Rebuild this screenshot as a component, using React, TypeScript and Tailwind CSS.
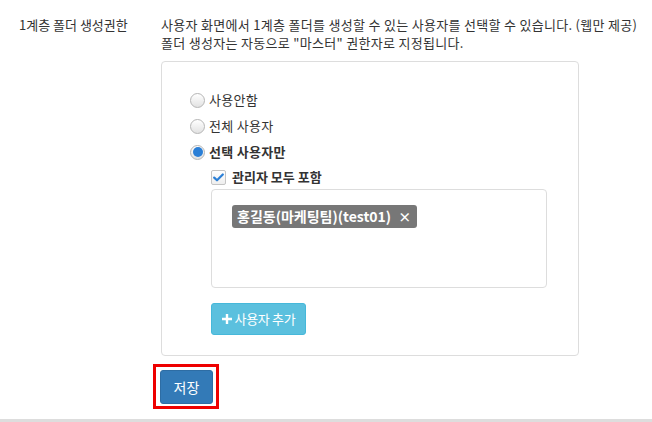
import React from "react";

function Radio({ checked, label, bold }: { checked?: boolean; label: string; bold?: boolean }) {
  return (
    <div className="flex h-[26px] items-center">
      <span className="flex h-[15px] w-[15px] items-center justify-center rounded-full border border-[#b5b5b5] bg-gradient-to-b from-[#ffffff] to-[#e2e2e2]">
        {checked && <span className="h-[10px] w-[10px] rounded-full bg-[#2b7fd6]" />}
      </span>
      <span className={"ml-[4px] text-[13px] tracking-[0.3px] text-[#333] " + (bold ? "font-bold" : "")}>{label}</span>
    </div>
  );
}

export default function App() {
  return (
    <div
      className="flex h-[422px] w-[652px] flex-col bg-white text-[#333]"
      style={{ fontFamily: '"Noto Sans CJK KR", "Noto Sans", sans-serif' }}
    >
      <div className="flex flex-1 pl-[19px] pt-[16px]">
        <div className="w-[142px] text-[13px] leading-[18px]">1계층 폴더 생성권한</div>
        <div className="flex flex-col">
          <div className="whitespace-nowrap text-[13px] leading-[18px] tracking-[0.3px] text-[#333]">
            <div>사용자 화면에서 1계층 폴더를 생성할 수 있는 사용자를 선택할 수 있습니다. (웹만 제공)</div>
            <div>폴더 생성자는 자동으로 "마스터" 권한자로 지정됩니다.</div>
          </div>
          <div className="mt-[9px] flex h-[295px] w-[418px] flex-col rounded-[4px] border border-[#dddddd] pl-[28px] pt-[25px]">
            <Radio label="사용안함" />
            <Radio label="전체 사용자" />
            <Radio checked bold label="선택 사용자만" />
            <div className="ml-[21px] flex flex-col">
              <div className="flex h-[24px] items-center">
                <span className="flex h-[15px] w-[15px] items-center justify-center rounded-[2px] border border-[#c4c4c4] bg-gradient-to-b from-[#ffffff] to-[#eeeeee]">
                  <svg width="11" height="9" viewBox="0 0 11 9">
                    <path d="M1.2 4.6 L4 7.3 L9.8 1.5" fill="none" stroke="#2b7fd6" strokeWidth="2.2" strokeLinecap="round" strokeLinejoin="round" />
                  </svg>
                </span>
                <span className="ml-[6px] text-[13px] font-bold">관리자 모두 포함</span>
              </div>
              <div className="h-[99px] w-[336px] rounded-[4px] border border-[#dddddd] pl-[20px] pt-[13px]">
                <span className="inline-flex h-[23px] items-center rounded-[3px] bg-[#777777] pl-[5px] pr-[6px] text-[14px] font-bold text-white">
                  홍길동(마케팅팀)(test01)
                  <span className="ml-[7px] text-[13px] font-bold">×</span>
                </span>
              </div>
              <div className="mt-[15px] flex h-[32px] w-[95px] items-center justify-center rounded-[3px] border border-[#46b8da] bg-[#5bc0de] text-[13px] tracking-[-0.3px] text-white">
                <svg width="10" height="10" viewBox="0 0 10 10" className="mr-[3px]">
                  <path d="M3.8 0h2.4v3.8H10v2.4H6.2V10H3.8V6.2H0V3.8h3.8z" fill="#fff" />
                </svg>
                사용자 추가
              </div>
            </div>
          </div>
          <div className="ml-[-8px] mt-[8px] w-fit border-[3px] border-[#ee0000] pb-[2px] pl-[4px] pr-[3px] pt-[3px]">
            <div className="flex h-[34px] w-[53px] items-center justify-center rounded-[3px] border border-[#2e6da4] bg-[#337ab7] text-[14px] text-white">
              저장
            </div>
          </div>
        </div>
      </div>
      <div className="h-[3px] bg-[#dddddd]" />
    </div>
  );
}
